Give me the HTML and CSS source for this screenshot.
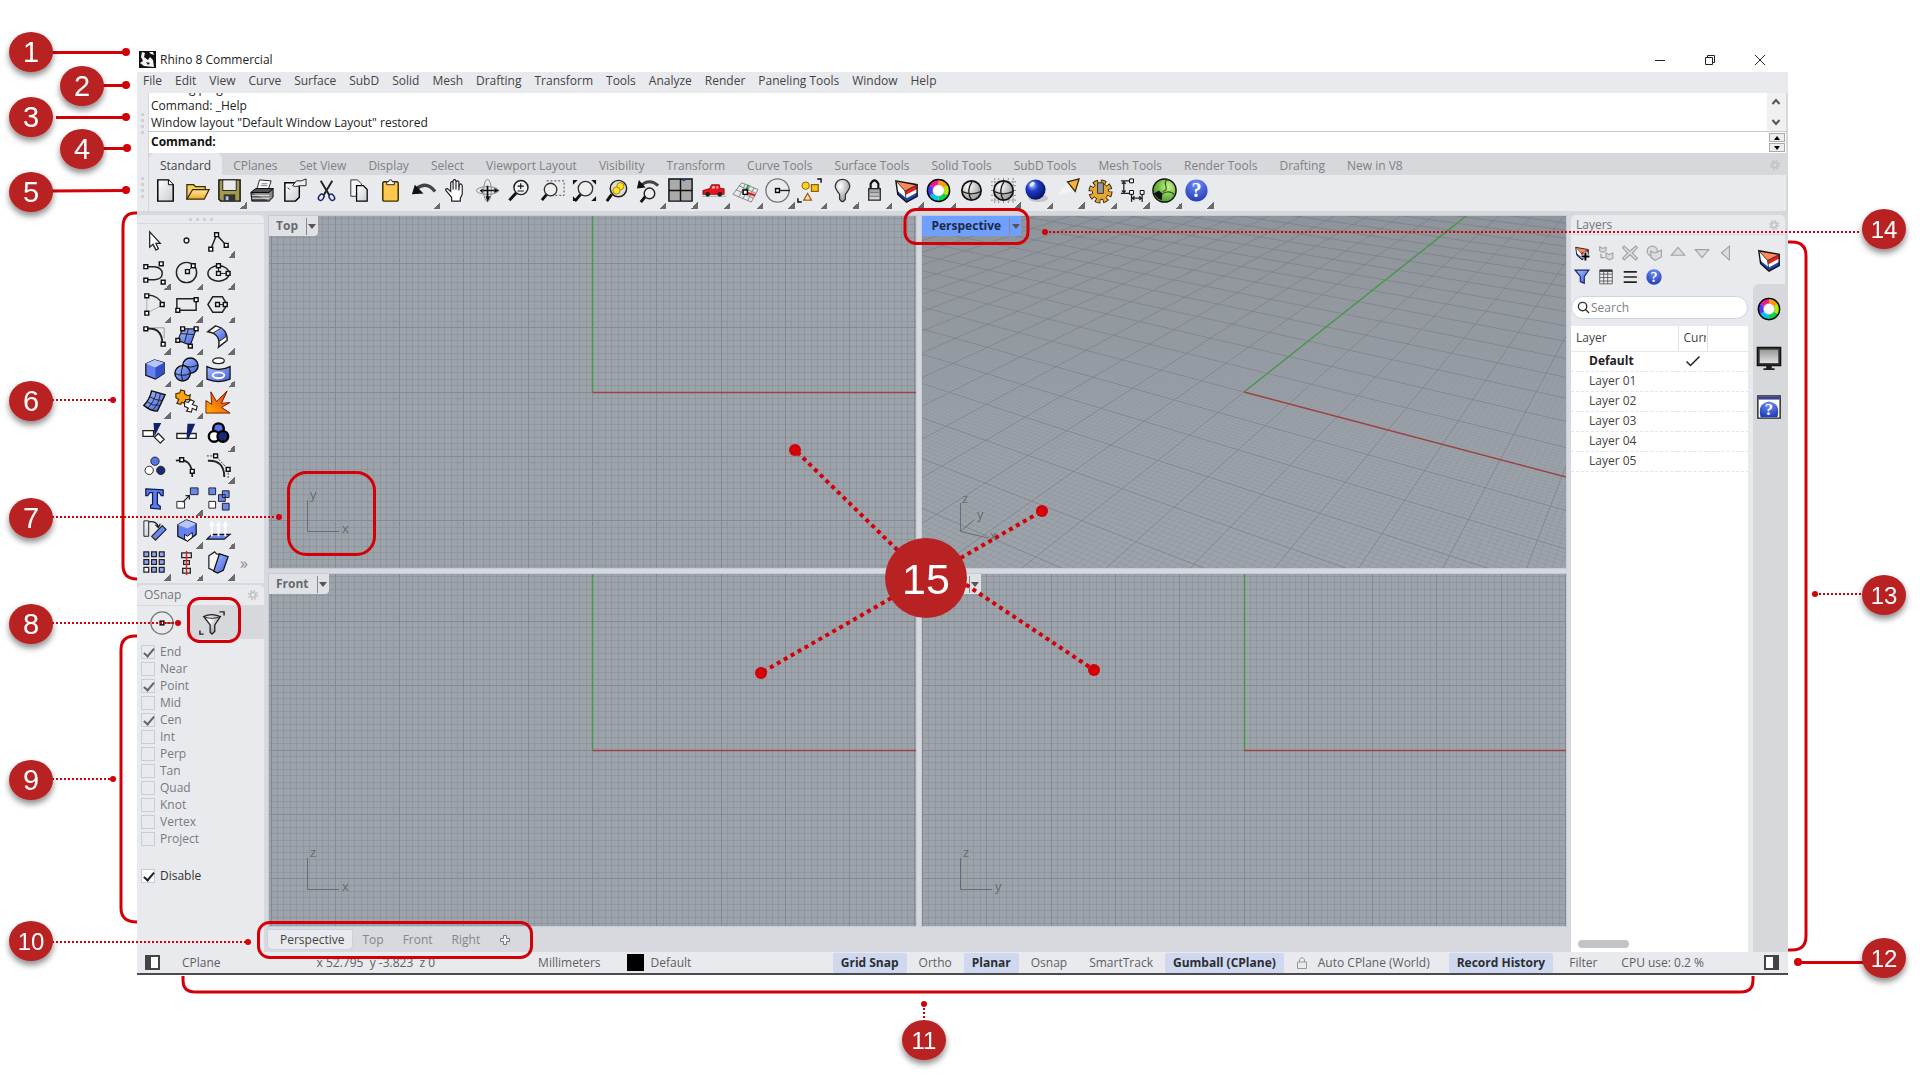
FILE: index.html
```html
<!DOCTYPE html>
<html lang="en">
<head>
<meta charset="utf-8">
<title>Rhino 8 Commercial</title>
<link rel="stylesheet" href="styles.css">
</head>
<body>
<svg class="defs" aria-hidden="true">
  <defs>
    <linearGradient id="gPage" x1="0" y1="0" x2="1" y2="1"><stop offset="0" stop-color="#fff"/><stop offset="1" stop-color="#c9cbce"/></linearGradient>
    <linearGradient id="gGold" x1="0" y1="0" x2="0" y2="1"><stop offset="0" stop-color="#ffe9a0"/><stop offset="1" stop-color="#f0a92a"/></linearGradient>
    <linearGradient id="gBlue" x1="0" y1="0" x2="1" y2="1"><stop offset="0" stop-color="#a9bcff"/><stop offset="1" stop-color="#3f5fe0"/></linearGradient>
    <linearGradient id="gScreen" x1="0" y1="0" x2="0" y2="1"><stop offset="0" stop-color="#999"/><stop offset="1" stop-color="#e0e0e0"/></linearGradient>
    <linearGradient id="gFire" x1="1" y1="0" x2="0" y2="1"><stop offset="0" stop-color="#e03010"/><stop offset="1" stop-color="#ffb400"/></linearGradient>
    <radialGradient id="gBall" cx=".35" cy=".3" r=".8"><stop offset="0" stop-color="#a8c4ff"/><stop offset=".35" stop-color="#1d3cc8"/><stop offset="1" stop-color="#020a55"/></radialGradient>
    <radialGradient id="gHelp" cx=".5" cy=".2" r=".9"><stop offset="0" stop-color="#6f8cf5"/><stop offset="1" stop-color="#1a35b0"/></radialGradient>
    <radialGradient id="gGrey" cx=".35" cy=".3" r=".8"><stop offset="0" stop-color="#fff"/><stop offset="1" stop-color="#8d8d8d"/></radialGradient>
    <radialGradient id="gGreen" cx=".65" cy=".35" r=".8"><stop offset="0" stop-color="#c9f28b"/><stop offset="1" stop-color="#2c8a10"/></radialGradient>
    <symbol id="gear" viewBox="0 0 14 14"><circle cx="7" cy="7" r="3" fill="none" stroke="#c3c4c4" stroke-width="2"/><circle cx="7" cy="7" r="5" fill="none" stroke="#c3c4c4" stroke-width="2" stroke-dasharray="2 1.93"/></symbol>
    <symbol id="layer" viewBox="0 0 28 28"><path d="M3 4 25 8V20L14 26 5 18Z" fill="#fff"/><path d="M4 14 5 18 14 26 25 20V16L14 22Z" fill="#1d43b8"/><path d="M12 14 25 8V12.500L13.500 18.500Z" fill="#e01f1f"/><path d="M3 4 25 8 12.500 14.500Z" fill="#ff8a55"/><path d="M3 4 25 8V20L14 26 5 18Z" fill="none" stroke="#111" stroke-width="1.500"/><path d="M3 4 12.500 14.500 25 8M12.500 14.500 14 26" fill="none" stroke="#333"/></symbol>
    <symbol id="help" viewBox="0 0 28 28"><circle cx="14" cy="14" r="11.500" fill="url(#gHelp)"/><text x="14" y="21" text-anchor="middle" font-family="Liberation Serif" font-weight="bold" font-size="21" fill="#fff">?</text></symbol>
    <symbol id="wheel" viewBox="0 0 28 28"><g fill="none" stroke-width="6"><path d="M14 5.500A8.500 8.500 0 0 1 21.400 9.800" stroke="#ff9a00"/><path d="M21.400 9.800A8.500 8.500 0 0 1 21.400 18.200" stroke="#b8e800"/><path d="M21.400 18.200A8.500 8.500 0 0 1 14 22.500" stroke="#00d84a"/><path d="M14 22.500A8.500 8.500 0 0 1 6.600 18.200" stroke="#00c8e8"/><path d="M6.600 18.200A8.500 8.500 0 0 1 6.600 9.800" stroke="#4a3cf0"/><path d="M6.600 9.800A8.500 8.500 0 0 1 14 5.500" stroke="#f01890"/></g><circle cx="14" cy="14" r="11.500" fill="none" stroke="#000" stroke-width="1.500"/><circle cx="14" cy="14" r="6" fill="#fff" stroke="#999" stroke-width=".6"/></symbol>
    <symbol id="sphere" viewBox="0 0 28 28"><circle cx="14" cy="14" r="10" fill="url(#gGrey)" stroke="#111" stroke-width="1.800"/><path d="M4 15Q14 20 24 15M15 4Q8 14 14 24" fill="none" stroke="#222" stroke-width="1.400"/></symbol>
    <symbol id="lens" viewBox="0 0 28 28"><path d="M10.500 16.500 3.500 24" stroke="#111" stroke-width="3"/><circle cx="15.500" cy="11" r="7.300" fill="#f3f4f6" stroke="#222" stroke-width="1.500"/></symbol>
    <symbol id="snap" viewBox="0 0 28 28"><circle cx="14" cy="14" r="12" fill="none" stroke="#777" stroke-width="1.400"/><path d="M16 14H27" stroke="#222" stroke-width="1.400"/><rect x="12" y="12" width="4" height="4" fill="#fff" stroke="#000" stroke-width="1.500"/></symbol>
  </defs>
</svg>

<main class="window">
  <header class="title-bar">
    <svg class="app-icon" viewBox="0 0 17 17"><path d="M0 0H17V17H0Z" fill="#111"/><path d="M3 1 6 2 5 6 9 9 11 6 14 9 15 16 5 15 1 12 4 10 2 6ZM10 1 14 1 15 4 12 3Z" fill="#f4f4f4"/><path d="M7 11 11 12 9 14Z" fill="#111"/></svg>
    <h1>Rhino 8 Commercial</h1>
    <div class="window-buttons">
      <button aria-label="Minimize"><svg viewBox="0 0 12 12"><path d="M1 6.500H11"/></svg></button>
      <button aria-label="Restore"><svg viewBox="0 0 12 12"><path d="M1.500 3.500H8.500V10.500H1.500ZM3.500 3.500V1.500H10.500V8.500H8.500"/></svg></button>
      <button aria-label="Close"><svg viewBox="0 0 12 12"><path d="M1 1 11 11M11 1 1 11"/></svg></button>
    </div>
  </header>

  <nav class="menu-bar">
    <button>File</button><button>Edit</button><button>View</button><button>Curve</button><button>Surface</button><button>SubD</button><button>Solid</button><button>Mesh</button><button>Drafting</button><button>Transform</button><button>Tools</button><button>Analyze</button><button>Render</button><button>Paneling Tools</button><button>Window</button><button>Help</button>
  </nav>

  <section class="command-area">
    <div class="grip"><i></i><i></i><i></i><i></i></div>
    <div class="command-main">
      <div class="history">
        <div class="history-text"><p>Loading plug-ins</p><p>Command: _Help</p><p>Window layout "Default Window Layout" restored</p></div>
        <div class="scroller">
          <button aria-label="Scroll up"><svg viewBox="0 0 10 10"><path d="M1.500 7 5 3 8.500 7"/></svg></button>
          <button aria-label="Scroll down"><svg viewBox="0 0 10 10"><path d="M1.500 3 5 7 8.500 3"/></svg></button>
        </div>
      </div>
      <div class="prompt">
        <label for="command">Command:</label><input id="command" type="text">
        <div class="spinner">
          <button aria-label="Previous"><svg viewBox="0 0 8 6"><path d="M1 5 4 1 7 5Z"/></svg></button>
          <button aria-label="Next"><svg viewBox="0 0 8 6"><path d="M1 1 4 5 7 1Z"/></svg></button>
        </div>
      </div>
    </div>
  </section>

  <section class="toolbar-area">
    <div class="grip low"><i></i><i></i><i></i><i></i></div>
    <div class="toolbar-main">
      <div class="tabs">
        <button class="active">Standard</button><button>CPlanes</button><button>Set View</button><button>Display</button><button>Select</button><button>Viewport Layout</button><button>Visibility</button><button>Transform</button><button>Curve Tools</button><button>Surface Tools</button><button>Solid Tools</button><button>SubD Tools</button><button>Mesh Tools</button><button>Render Tools</button><button>Drafting</button><button>New in V8</button>
        <svg class="gear"><use href="#gear"/></svg>
      </div>
      <div class="toolbar">
        <button aria-label="New"><svg viewBox="0 0 28 28"><path d="M6 3H17L22 8V25H6Z" fill="url(#gPage)" stroke="#000" stroke-width="1.500"/><path d="M17 3V8H22" fill="#fff" stroke="#000"/></svg></button>
        <button aria-label="Open"><svg viewBox="0 0 28 28"><path d="M3 23V8H10L12 10H22V13" fill="#f5cf62" stroke="#3a2c00" stroke-width="1.300"/><path d="M3 23 9 13H26L21 23Z" fill="url(#gGold)" stroke="#3a2c00" stroke-width="1.300"/></svg></button>
        <button class="more" aria-label="Save"><svg viewBox="0 0 28 28"><path d="M3 3H25V25H5L3 23Z" fill="#a39a4f" stroke="#111" stroke-width="1.500"/><path d="M7 3H21V14H7Z" fill="#e9eaec" stroke="#222"/><path d="M8 18H20V25H8Z" fill="#333"/><path d="M10 20H13V24H10Z" fill="#aac4e8"/></svg></button>
        <button aria-label="Print"><svg viewBox="0 0 28 28"><path d="M9 13 12 3 24 4 21 13Z" fill="#fff" stroke="#222"/><path d="M14 7H20M13 9H20" stroke="#777"/><path d="M3 16 8 12H26L22 16V25H4Z" fill="#555" stroke="#000"/><path d="M3 16H22L26 12V21L22 25" fill="#888" stroke="#000"/><path d="M4 19H22M4 22H22" stroke="#eee"/></svg></button>
        <button aria-label="Properties"><svg viewBox="0 0 28 28"><path d="M4 6H19V21L15 25H4Z" fill="url(#gPage)" stroke="#000" stroke-width="1.500"/><path d="M12 9 16 4H21L26 2V9H20L15 10Z" fill="#eee" stroke="#222"/><path d="M7 11 9 13" stroke="#222"/></svg></button>
        <button aria-label="Cut"><svg viewBox="0 0 28 28"><path d="M8 4 17 19M20 4 11 19" stroke="#222" stroke-width="2"/><ellipse cx="8.500" cy="21" rx="2.500" ry="3.500" fill="none" stroke="#16266e" stroke-width="1.500" transform="rotate(35 8.500 21)"/><ellipse cx="19.500" cy="21" rx="2.500" ry="3.500" fill="none" stroke="#16266e" stroke-width="1.500" transform="rotate(-35 19.500 21)"/></svg></button>
        <button aria-label="Copy"><svg viewBox="0 0 28 28"><path d="M6 3H13L17 7V20H6Z" fill="#f5f5f6" stroke="#333"/><path d="M12 9H19L23 13V25H12Z" fill="url(#gPage)" stroke="#000" stroke-width="1.300"/></svg></button>
        <button aria-label="Paste"><svg viewBox="0 0 28 28"><rect x="6" y="5" width="16" height="20" rx="1.500" fill="#ffc94d" stroke="#3a2c00" stroke-width="1.500"/><path d="M10 8V5H12L13 3H15L16 5H18V8Z" fill="#fff" stroke="#222"/></svg></button>
        <button class="more" aria-label="Undo"><svg viewBox="0 0 28 28"><path d="M7 12Q17 4 26 15" fill="none" stroke="#444" stroke-width="3.500"/><path d="M2 18 5 8 14 17Z" fill="#111"/></svg></button>
        <button aria-label="Pan"><svg viewBox="0 0 28 28"><path d="M10 25V21L4 14Q3 12 5.500 12L9 15V6Q10 3.500 11.500 6V13V4Q13 1.500 14.500 4V13V5Q16 3 17.500 5V14L18 8Q20 6 21 9V18L19 22V25Z" fill="#fff" stroke="#222" stroke-width="1.200"/></svg></button>
        <button aria-label="Rotate view"><svg viewBox="0 0 28 28"><g fill="none" stroke="#888"><ellipse cx="14" cy="14" rx="11.500" ry="4"/><ellipse cx="14" cy="14" rx="4" ry="11.500"/></g><path d="M9 14H21M14 9V21" stroke="#111" stroke-width="1.800"/><path d="M12 20H17L14 26ZM21 11.500V16.500L26 14ZM9 12 6 14 9 17Z" fill="#111"/></svg></button>
        <button aria-label="Zoom dynamic"><svg viewBox="0 0 28 28"><use href="#lens"/><path d="M12 9.500H18.500M15.300 6.500V12.500M12 14.500H18.500" stroke="#111" stroke-width="1.200"/></svg></button>
        <button aria-label="Zoom window"><svg viewBox="0 0 28 28"><path d="M8 4H26V19H9" fill="none" stroke="#444" stroke-dasharray="2 2"/><path d="M8 18 3 24" stroke="#111" stroke-width="3"/><circle cx="12" cy="13" r="6.500" fill="#eee" stroke="#333" stroke-width="1.400"/></svg></button>
        <button aria-label="Zoom extents"><svg viewBox="0 0 28 28"><path d="M10 18 4 25" stroke="#111" stroke-width="3"/><circle cx="15" cy="12" r="7.500" fill="#eee" stroke="#333" stroke-width="1.400"/><path d="M2 3H7L2 8ZM26 3H21L26 8ZM26 25H21L26 20ZM2 25V20L7 25Z" fill="#111"/></svg></button>
        <button aria-label="Zoom selected"><svg viewBox="0 0 28 28"><path d="M9 18 4 25" stroke="#111" stroke-width="3"/><circle cx="16" cy="12" r="8.500" fill="#ddd" stroke="#222" stroke-width="1.500"/><circle cx="18" cy="9.500" r="3.700" fill="#ffe22e" stroke="#a58a00"/><circle cx="14" cy="14" r="3.700" fill="#ffe22e" stroke="#a58a00"/></svg></button>
        <button class="more" aria-label="Undo view"><svg viewBox="0 0 28 28"><path d="M6 9Q15 1 24 9" fill="none" stroke="#444" stroke-width="3"/><path d="M2 12 4 3 11 11Z" fill="#111"/><path d="M11 20 6 26" stroke="#111" stroke-width="3"/><circle cx="15" cy="17" r="5.500" fill="#eee" stroke="#222" stroke-width="1.500"/></svg></button>
        <button class="more" aria-label="Four views"><svg viewBox="0 0 28 28"><path d="M2 2H26V25H2Z" fill="#aaa" stroke="#111" stroke-width="1.500"/><path d="M14 2V25M2 14H26" stroke="#111" stroke-width="1.500"/><path d="M16 3.500H19" stroke="#1d43d8" stroke-width="1.500"/></svg></button>
        <button class="more" aria-label="Car"><svg viewBox="0 0 28 28"><path d="M2 20H27" stroke="#aaa"/><path d="M3 18V14L10 12 12 8H20L21 12H25V18Z" fill="#e5151c" stroke="#8a0000" stroke-width=".8"/><path d="M13 9.500H15.500V12H12ZM17 9.500H19V12H17Z" fill="#f5c8c8"/><circle cx="8" cy="18" r="2.400" fill="#222"/><circle cx="20.500" cy="18" r="2.400" fill="#222"/></svg></button>
        <button class="more" aria-label="Set CPlane"><svg viewBox="0 0 28 28"><path d="M10 6 27 13 20 26 1 18ZM7 9 25 17M4 13 22 22M14 7 7 21M19 9 11 23M23 11 16 25" fill="none" stroke="#888"/><path d="M14 16 17 8" stroke="#18a030" stroke-width="2"/><path d="M14 16 24 19" stroke="#e02020" stroke-width="2.500"/><path d="M11.500 13.500H16V18H11.500Z" fill="#fff" stroke="#000" stroke-width="1.500"/></svg></button>
        <button class="more" aria-label="Object snap"><svg viewBox="0 0 28 28"><use href="#snap"/></svg></button>
        <button class="more" aria-label="Select"><svg viewBox="0 0 28 28"><circle cx="10" cy="9" r="3.800" fill="#ffd21c" stroke="#8a6200"/><path d="M16 8H23V15H16Z" fill="#ffc21c" stroke="#8a6200" stroke-width="1.300"/><path d="M12 17 16 24H8Z" fill="#ffe7c0" stroke="#a45a10" stroke-width="1.300"/><path d="M22 2H26V6M2 22V26H6" fill="none" stroke="#111" stroke-width="1.500"/></svg></button>
        <button class="more" aria-label="Hide"><svg viewBox="0 0 28 28"><path d="M11 18Q6 12 6.500 9Q8 2.500 14 2.500Q20 2.500 21.500 9Q22 12 17 18V23Q14 28 11 23Z" fill="url(#gGrey)" stroke="#333" stroke-width="1.300"/></svg></button>
        <button class="more" aria-label="Lock"><svg viewBox="0 0 28 28"><path d="M10 13V7Q14 0 18 7V13" fill="none" stroke="#111" stroke-width="2.200"/><path d="M8 12H20V24H8Z" fill="url(#gScreen)" stroke="#222" stroke-width="1.300"/><path d="M8 16H20M8 20H20" stroke="#777"/></svg></button>
        <button class="more" aria-label="Layers"><svg><use href="#layer"/></svg></button>
        <button class="more" aria-label="Color"><svg><use href="#wheel"/></svg></button>
        <button aria-label="Shade"><svg><use href="#sphere"/></svg></button>
        <button class="more" aria-label="Shaded view"><svg viewBox="0 0 28 28"><path d="M5 1V27M9 1V27M14 1V27M19 1V27M24 1V27M1 5H27M1 9H27M1 14H27M1 19H27M1 24H27" stroke="#888" stroke-dasharray="2 1"/><use href="#sphere"/></svg></button>
        <button class="more" aria-label="Render"><svg viewBox="0 0 28 28"><ellipse cx="17" cy="22" rx="10" ry="4" fill="#c5c5c8"/><circle cx="14" cy="13" r="10.500" fill="url(#gBall)"/><ellipse cx="10.500" cy="7.500" rx="3" ry="2" fill="#e8f0ff" transform="rotate(-35 10.500 7.500)"/></svg></button>
        <button class="more" aria-label="Spotlight"><svg viewBox="0 0 28 28"><path d="M3 20 14 6 20 14Z" fill="#f3f3f1"/><path d="M14 5 26 2 22 15Z" fill="#f8b43a" stroke="#3a2200" stroke-width="1.300"/></svg></button>
        <button class="more" aria-label="Options"><svg viewBox="0 0 28 28"><circle cx="14" cy="15" r="9.500" fill="none" stroke="#3a2500" stroke-width="6" stroke-dasharray="5 2.460"/><circle cx="14" cy="15" r="8.500" fill="#e5a834" stroke="#3a2500"/><circle cx="14" cy="15" r="9.500" fill="none" stroke="#e5a834" stroke-width="4" stroke-dasharray="3.400 4.060" stroke-dashoffset="-.8"/><path d="M11 6H17V17H11Z" fill="#999" stroke="#333"/></svg></button>
        <button class="more" aria-label="Dimension"><svg viewBox="0 0 28 28"><g fill="none" stroke="#222" stroke-width="1.300"><path d="M2 4H12M5 5V16M2 17H13V26M14 22H23M24 18V26M3 7 5 5 7 7M3 14 5 16 7 14M16 20 14 22 16 24M21 20 23 22 21 24"/></g><g fill="#fff" stroke="#000"><path d="M11 2H15V6H11ZM11 14H15V18H11ZM22 14H26V18H22Z"/></g></svg></button>
        <button class="more" aria-label="Grasshopper"><svg viewBox="0 0 28 28"><circle cx="14" cy="14" r="12" fill="url(#gGreen)" stroke="#111" stroke-width="1.500"/><path d="M12 15Q18 14 15 8Q14 5 17 2.500M12 17Q20 13 25 19" fill="none" stroke="#2a5c10" stroke-width="1.200"/><path d="M3 17 8 14 12 17 11 24 7 22Z" fill="#111"/></svg></button>
        <button class="more" aria-label="Help"><svg><use href="#help"/></svg></button>
      </div>
    </div>
  </section>

  <section class="workspace">
    <aside class="left-dock">
      <div class="toolbox">
        <div class="top-grip"><i></i><i></i><i></i><i></i></div>
        <div class="tools">
          <button aria-label="Pointer"><svg viewBox="0 0 28 28"><path d="M9 5V21L12.500 18 15.500 24 18 22.500 15.500 17H20Z" fill="#fff" stroke="#222" stroke-width="1.300"/></svg></button>
          <button aria-label="Point"><svg viewBox="0 0 28 28"><circle cx="14" cy="14" r="2.500" fill="#fff" stroke="#222" stroke-width="1.500"/></svg></button>
          <button class="more" aria-label="Polyline"><svg viewBox="0 0 28 28"><path d="M6 23 12 8 22 19" fill="none" stroke="#222" stroke-width="1.500"/><path d="M4 21H8V25H4ZM10 6H14V10H10ZM20 17H24V21H20Z" class="node"/></svg></button>
          <button class="more" aria-label="Curve"><svg viewBox="0 0 28 28"><path d="M6 8H14Q22 9 22 15Q22 21 14 21.500H6" fill="none" stroke="#222" stroke-width="1.500"/><path d="M3 6H7V10H3ZM3 20H7V24H3ZM19 3H23V7H19ZM21 22H25V26H21Z" class="node"/></svg></button>
          <button class="more" aria-label="Circle"><svg viewBox="0 0 28 28"><circle cx="14" cy="14" r="10.500" fill="none" stroke="#222" stroke-width="1.500"/><path d="M15 13 21 7" stroke="#222"/><path d="M13 11H17V15H13ZM19 5H23V9H19Z" class="node"/></svg></button>
          <button class="more" aria-label="Ellipse"><svg viewBox="0 0 28 28"><ellipse cx="14" cy="15" rx="11" ry="8" fill="none" stroke="#222" stroke-width="1.500"/><path d="M14 7V15H25" fill="none" stroke="#222"/><path d="M12 5H16V9H12ZM12 13H16V17H12ZM22 13H26V17H22Z" class="node"/></svg></button>
          <button class="more" aria-label="Arc"><svg viewBox="0 0 28 28"><path d="M6 23V5M23 14 6 23" fill="none" stroke="#aaa"/><path d="M7 4Q19 5 22 14" fill="none" stroke="#222" stroke-width="1.500"/><path d="M4 3H8V7H4ZM20 12H24V16H20ZM4 21H8V25H4Z" class="node"/></svg></button>
          <button class="more" aria-label="Rectangle"><svg viewBox="0 0 28 28"><path d="M4 8H24V20H4Z" fill="none" stroke="#222" stroke-width="1.500"/><path d="M3 18H7V22H3ZM22 7H26V11H22Z" class="node"/></svg></button>
          <button class="more" aria-label="Polygon"><svg viewBox="0 0 28 28"><path d="M8 6H18L23 14 18 22H8L3 14Z" fill="none" stroke="#222" stroke-width="1.500"/><path d="M14 14H22" stroke="#222"/><path d="M11 12H15V16H11ZM19 12H23V16H19Z" class="node"/></svg></button>
          <button class="more" aria-label="Fillet"><svg viewBox="0 0 28 28"><path d="M12 5H24V16" fill="none" stroke="#999"/><path d="M5 6Q22 4 22 21" fill="none" stroke="#222" stroke-width="2"/><path d="M3 4H7V8H3ZM21 20H25V24H21Z" class="node"/></svg></button>
          <button class="more" aria-label="Surface"><svg viewBox="0 0 28 28"><path d="M10 6H24L18 23 5 18Z" fill="url(#gBlue)" stroke="#222" stroke-width="1.300"/><path d="M8 11 22 12M16 6 12 20" stroke="#222"/><path d="M8 4H12V8H8ZM22 4H26V8H22ZM3 16H7V20H3ZM16 22H20V26H16Z" class="node"/></svg></button>
          <button class="more" aria-label="Sweep"><svg viewBox="0 0 28 28"><path d="M3 9 11 3Q23 6 23 17V18L14 25Q17 11 3 9Z" fill="#fff" stroke="#222" stroke-width="1.500"/><path d="M9 10 17 5Q22 9 22 14L15 19Q14 13 9 10Z" fill="url(#gBlue)" stroke="#222"/></svg></button>
          <button class="more" aria-label="Box"><svg viewBox="0 0 28 28"><path d="M5 8 14 4 24 7V18L15 24 5 20Z" fill="#6582ee" stroke="#111" stroke-width="1.300"/><path d="M5 8 14 4 24 7 15 12Z" fill="#b5c5ff"/><path d="M15 12 24 7V18L15 24Z" fill="#3450c8"/></svg></button>
          <button class="more" aria-label="Boolean"><svg viewBox="0 0 28 28"><circle cx="18" cy="10" r="8" fill="url(#gBlue)" stroke="#111" stroke-width="1.500"/><circle cx="10" cy="18" r="8" fill="url(#gBlue)" stroke="#111" stroke-width="1.500"/><path d="M2 18Q10 22 18 18M10 10Q7 18 10 26M10 9Q18 14 26 9" fill="none" stroke="#111"/></svg></button>
          <button class="more" aria-label="Project curve"><svg viewBox="0 0 28 28"><ellipse cx="14" cy="5" rx="6" ry="3" fill="#fff" stroke="#222" stroke-width="1.300"/><path d="M2 11Q14 17 26 11V24Q14 29 2 24Z" fill="url(#gBlue)" stroke="#111" stroke-width="1.300"/><ellipse cx="14" cy="20" rx="6" ry="3" fill="none" stroke="#fff" stroke-width="2"/></svg></button>
          <button class="more" aria-label="Mesh"><svg viewBox="0 0 28 28"><path d="M11 3 25 7 17 24Q10 24 3 18Q9 12 11 3Z" fill="url(#gBlue)" stroke="#111" stroke-width="1.500"/><path d="M9 9Q15 13 22 13M6 14Q12 19 19 18M16 4Q14 14 7 21M20 6Q19 16 12 23" fill="none" stroke="#222"/></svg></button>
          <button class="more" aria-label="Plug-ins"><svg viewBox="0 0 28 28"><path d="M3 6 7 5 8 2 12 3 12 6 15 8 18 7 17 12 13 12 13 16 9 15 8 17 4 16 6 12 3 10Z" fill="#f8a314" stroke="#4a2a00" stroke-width="1.200"/><path d="M12 14 16 15 18 12 22 14 20 17 25 19 24 23 20 21 19 25 14 24 16 21 12 19Z" fill="#fff" stroke="#222" stroke-width="1.200"/></svg></button>
          <button aria-label="Explode"><svg viewBox="0 0 28 28"><path d="M1 26V13L7 17 6 4 12 14 23 3 17 16 26 15 17 20 26 26Z" fill="url(#gFire)" stroke="#7a1800"/></svg></button>
          <button aria-label="Trim"><svg viewBox="0 0 28 28"><path d="M13 11H2V17H13ZM14 18 20 24 24 20 18 14Z" fill="#fff" stroke="#222" stroke-width="1.300"/><path d="M13 3H21L14 17Z" fill="#10216e"/></svg></button>
          <button aria-label="Split"><svg viewBox="0 0 28 28"><path d="M4 14H24V19H4Z" fill="#fff" stroke="#222" stroke-width="1.400"/><path d="M15 4H23L16 20H14Z" fill="#10216e"/></svg></button>
          <button class="more" aria-label="Group"><svg viewBox="0 0 28 28"><g stroke="#000" stroke-width="2.500"><circle cx="14" cy="9" r="5.500" fill="#5775e8"/><circle cx="9.500" cy="17" r="5.500" fill="#fff"/><circle cx="18.500" cy="17" r="5.500" fill="#182b78"/></g></svg></button>
          <button aria-label="Ungroup"><svg viewBox="0 0 28 28"><g stroke="#222"><circle cx="14.500" cy="8.500" r="4.300" fill="#5775e8"/><circle cx="8.500" cy="18" r="4.300" fill="#fff"/><circle cx="20.500" cy="18" r="4.300" fill="#182b78"/></g></svg></button>
          <button aria-label="Edit points"><svg viewBox="0 0 28 28"><path d="M3 8Q20 4 20 25" fill="none" stroke="#222" stroke-width="1.800"/><path d="M7 5H11V9H7ZM18 17H22V21H18Z" class="node"/></svg></button>
          <button class="more" aria-label="Control points"><svg viewBox="0 0 28 28"><path d="M2 3H11L24 17V26" fill="none" stroke="#333" stroke-dasharray="2 1.500"/><path d="M3 8Q20 7 20 25" fill="none" stroke="#222" stroke-width="2"/><path d="M9 1H13V5H9ZM22 15H26V19H22Z" class="node"/></svg></button>
          <button aria-label="Text tool"><svg viewBox="0 0 28 28"><path d="M5 4 23 5V11H21L19 8H17V20L20 22V25L10 24V21L12 20V8H9L7 11H5Z" fill="#5d7ce8" stroke="#0c1a60" stroke-width="1.300"/></svg></button>
          <button class="more" aria-label="Move"><svg viewBox="0 0 28 28"><path d="M4 17H12V24H4Z" fill="#fff" stroke="#222"/><path d="M18 3H26V10H18Z" fill="#6a86f0" stroke="#222"/><path d="M10 18 17 11M13 11H17V15" fill="none" stroke="#222" stroke-width="1.300"/></svg></button>
          <button aria-label="Copy objects"><svg viewBox="0 0 28 28"><g stroke="#222" fill="#6a86f0"><path d="M4 3H11V10H4ZM18 6H25V13H18ZM14 10H21V17H14ZM18 19H25V26H18Z"/><path d="M4 17H11V24H4Z" fill="#fff"/></g></svg></button>
          <button aria-label="Rotate"><svg viewBox="0 0 28 28"><path d="M3 4H8V20H3Z" fill="url(#gPage)" stroke="#222"/><path d="M8 5Q16 4 18 10M15 8 18 11 20 7" fill="none" stroke="#222" stroke-width="1.300"/><path d="M11 20 22 9 26 13 15 24Z" fill="#6a86f0" stroke="#222" stroke-width="1.200"/></svg></button>
          <button class="more" aria-label="Solid edit"><svg viewBox="0 0 28 28"><path d="M5 8 14 3 24 7V18L15 25 5 20Z" fill="#6582ee" stroke="#111" stroke-width="1.300"/><path d="M5 8 14 3 24 7 15 12Z" fill="#b5c5ff"/><path d="M12 18 15 20 20 16V21L15 25 12 23Z" fill="#fff" stroke="#111"/></svg></button>
          <button class="more" aria-label="Extrude"><svg viewBox="0 0 28 28"><path d="M7 18H26L20 23H2Z" fill="#6a86f0" stroke="#111" stroke-width="1.200"/><path d="M7 20V8M14 20V8M21 20V8" stroke="#fff" stroke-width="2"/><path d="M4 9 7 4 10 9ZM11 9 14 4 17 9ZM18 9 21 4 24 9Z" fill="#fff"/></svg></button>
          <button class="more" aria-label="Array"><svg viewBox="0 0 28 28"><g fill="#8fa6f8" stroke="#222" stroke-width="1.300"><path d="M3 3H8V8H3ZM11 3H16V8H11ZM19 3H24V8H19ZM3 11H8V16H3ZM11 11H16V16H11ZM19 11H24V16H19ZM11 19H16V24H11ZM19 19H24V24H19Z"/><path d="M3 19H8V24H3Z" fill="#fff"/></g></svg></button>
          <button class="more" aria-label="Align"><svg viewBox="0 0 28 28"><g fill="#e4e4e4" stroke="#222" stroke-width="1.300"><path d="M9 4H19V9H9ZM11 12H17V16H11ZM10 20H18V25H10Z"/></g><path d="M14 2V27" stroke="#e02020" stroke-width="1.500"/></svg></button>
          <button class="more" aria-label="Flow"><svg viewBox="0 0 28 28"><path d="M4 7 10 3 12 5 18 6 12 24 4 20Z" fill="#f5f5f5" stroke="#222" stroke-width="1.300"/><path d="M15 5 24 8 19 22 13 25 9 23Z" fill="url(#gBlue)" stroke="#111" stroke-width="1.300"/></svg></button>
        </div>
        <button class="expand" aria-label="More tools">»</button>
      </div>
      <div class="osnap">
        <h2 class="panel-title">OSnap <svg class="gear"><use href="#gear"/></svg></h2>
        <div class="osnap-tabs">
          <button aria-label="Object snaps"><svg><use href="#snap"/></svg></button>
          <button class="filter" aria-label="Selection filter"><svg viewBox="0 0 28 28"><path d="M5 7Q13 3 23 7L17 16V23L14 26 12 24V16Z" fill="url(#gGrey)" stroke="#222" stroke-width="1.400"/><path d="M5 7Q14 11 23 7" fill="none" stroke="#222"/><path d="M22 2H27V6M1 22V26H5" fill="none" stroke="#222" stroke-width="1.500"/></svg></button>
        </div>
        <div class="checks">
          <label><input type="checkbox" checked>End</label>
          <label><input type="checkbox">Near</label>
          <label><input type="checkbox" checked>Point</label>
          <label><input type="checkbox">Mid</label>
          <label><input type="checkbox" checked>Cen</label>
          <label><input type="checkbox">Int</label>
          <label><input type="checkbox">Perp</label>
          <label><input type="checkbox">Tan</label>
          <label><input type="checkbox">Quad</label>
          <label><input type="checkbox">Knot</label>
          <label><input type="checkbox">Vertex</label>
          <label><input type="checkbox">Project</label>
          <label class="disable"><input type="checkbox" checked>Disable</label>
        </div>
      </div>
    </aside>

    <div class="center">
      <div class="viewports">
        <section class="viewport"><canvas data-kind="plan"></canvas>
          <button class="view-label">Top<b></b></button>
          <svg class="axes" viewBox="0 0 60 60"><path d="M1.500 17V48.500H33"/><text x="4" y="16">y</text><text x="36" y="50">x</text></svg></section>
        <section class="viewport"><canvas data-kind="perspective"></canvas>
          <button class="view-label current">Perspective<b></b></button>
          <svg class="axes" viewBox="0 0 60 60"><path d="M1.500 20V48.500L15 37M1.500 48.500 29 55"/><text x="3" y="20">z</text><text x="18" y="36">y</text><text x="31" y="57">x</text></svg></section>
        <section class="viewport"><canvas data-kind="plan"></canvas>
          <button class="view-label">Front<b></b></button>
          <svg class="axes" viewBox="0 0 60 60"><path d="M1.500 17V48.500H33"/><text x="4" y="16">z</text><text x="36" y="50">x</text></svg></section>
        <section class="viewport"><canvas data-kind="plan"></canvas>
          <button class="view-label">Right<b></b></button>
          <svg class="axes" viewBox="0 0 60 60"><path d="M1.500 17V48.500H33"/><text x="4" y="16">z</text><text x="36" y="50">y</text></svg></section>
      </div>
      <div class="view-tabs">
        <button class="active">Perspective</button><button>Top</button><button>Front</button><button>Right</button>
        <button aria-label="New viewport"><svg viewBox="0 0 12 12"><path d="M4.500 1.500H7.500V4.500H10.500V7.500H7.500V10.500H4.500V7.500H1.500V4.500H4.500Z"/></svg></button>
      </div>
    </div>

    <aside class="right-dock">
      <h2 class="panel-title">Layers <svg class="gear"><use href="#gear"/></svg></h2>
      <div class="dock-body">
        <div class="layers">
          <div class="layer-tools">
            <button aria-label="New layer"><svg viewBox="0 0 28 28"><use href="#layer"/><path d="M20 12V27M12 20H27" stroke="#fff" stroke-width="6"/><path d="M20 13V27M13 20H27" stroke="#000" stroke-width="3.500"/></svg></button>
            <button aria-label="New sublayer"><svg viewBox="0 0 28 28"><path d="M3 3 8 6 14 4V10L8 13 3 10ZM14 14 20 17 26 14V23L20 26 14 22ZM5 15V22H12" class="off"/></svg></button>
            <button aria-label="Delete"><svg viewBox="0 0 28 28"><path d="M4 2 14 11 24 2 27 5 18 14 27 23 24 26 14 17 4 26 1 23 10 14 1 5Z" class="off"/></svg></button>
            <button aria-label="Duplicate"><svg viewBox="0 0 28 28"><circle cx="11" cy="11" r="9" class="off"/><path d="M8 11 16 14 27 9V21L16 27 9 22Z" class="off"/></svg></button>
            <button aria-label="Move up"><svg viewBox="0 0 28 28"><path d="M14 4 26 18H2Z" class="off"/></svg></button>
            <button aria-label="Move down"><svg viewBox="0 0 28 28"><path d="M14 22 2 8H26Z" class="off"/></svg></button>
            <button aria-label="Move out"><svg viewBox="0 0 28 28"><path d="M6 14 20 2V26Z" class="off"/></svg></button>
            <button aria-label="Filter"><svg viewBox="0 0 28 28"><path d="M2 2H26L18 13V25L11 22V13Z" fill="url(#gBlue)" stroke="#16256a" stroke-width="2"/></svg></button>
            <button aria-label="Columns"><svg viewBox="0 0 28 28"><path d="M3 2H25V26H3ZM10 2V26M17 2V26M3 9H25M3 15H25M3 21H25" fill="#eee" stroke="#555" stroke-width="1.500"/><path d="M3 3H25" stroke="#333" stroke-width="4"/></svg></button>
            <button aria-label="Menu"><svg viewBox="0 0 28 28"><path d="M3 5H26M3 14H26M3 23H26" stroke="#222" stroke-width="3"/></svg></button>
            <button aria-label="Help"><svg viewBox="2 2 24 24"><use href="#help" width="28" height="28"/></svg></button>
          </div>
          <label class="search"><svg viewBox="0 0 14 14"><circle cx="6" cy="6" r="4.500"/><path d="M9 9 13 13"/></svg><input type="search" placeholder="Search" aria-label="Search layers"></label>
          <div class="layer-list">
            <table>
              <thead><tr><th>Layer</th><th><span>Current</span></th><th></th></tr></thead>
              <tbody>
                <tr class="current-layer"><td>Default</td><td><svg viewBox="0 0 16 12"><path d="M1.500 6.500 5.500 10.500 14.500 1.500"/></svg></td><td></td></tr>
                <tr><td>Layer 01</td><td></td><td></td></tr>
                <tr><td>Layer 02</td><td></td><td></td></tr>
                <tr><td>Layer 03</td><td></td><td></td></tr>
                <tr><td>Layer 04</td><td></td><td></td></tr>
                <tr><td>Layer 05</td><td></td><td></td></tr>
              </tbody>
            </table>
            <div class="scroll-thumb"></div>
          </div>
        </div>
        <nav class="dock-tabs">
          <button class="active" aria-label="Layers"><svg><use href="#layer"/></svg></button>
          <button aria-label="Materials"><svg><use href="#wheel"/></svg></button>
          <button aria-label="Display"><svg viewBox="0 0 28 28"><path d="M1.500 2.500H26.500V22H1.500Z" fill="#333" stroke="#111" stroke-width="1.500"/><path d="M4 5H24V19.500H4Z" fill="url(#gScreen)"/><path d="M11 22H17V25H20V27H8V25H11Z" fill="#222"/></svg></button>
          <button aria-label="Help"><svg viewBox="0 0 28 28"><path d="M2 2H26V26H2Z" fill="#fff" stroke="#222" stroke-width="1.500"/><path d="M2.500 2.500H25.500V6H2.500Z" fill="#3a3f90"/><path d="M5 25Q1 10 14 8Q27 10 23 25Z" fill="url(#gHelp)"/><text x="14" y="23" text-anchor="middle" font-family="Liberation Serif" font-weight="bold" font-size="18" fill="#fff">?</text></svg></button>
        </nav>
      </div>
    </aside>
  </section>

  <footer class="status-bar">
    <button class="side-toggle" aria-label="Toggle left sidebar"></button>
    <button class="s-cplane">CPlane</button>
    <output class="s-coords">x 52.795&nbsp; y -3.823&nbsp; z 0</output>
    <button class="s-units">Millimeters</button>
    <button class="s-layer"><i class="swatch"></i>Default</button>
    <div class="modes">
      <button class="on">Grid Snap</button><button>Ortho</button><button class="on">Planar</button><button>Osnap</button><button>SmartTrack</button><button class="on">Gumball (CPlane)</button>
      <button class="auto"><svg viewBox="0 0 12 14"><path d="M1.500 6H10.500V12.500H1.500ZM3.500 6V3.500Q6 0 8.500 3.500V6"/></svg>Auto CPlane (World)</button>
      <button class="on">Record History</button><button class="filter-mode">Filter</button><output>CPU use: 0.2 %</output>
    </div>
    <button class="side-toggle right" aria-label="Toggle right sidebar"></button>
  </footer>
</main>

<svg class="callouts">
  <defs><filter id="shadow" x="-30%" y="-30%" width="160%" height="180%"><feDropShadow dx="0" dy="4" stdDeviation="3" flood-color="#000" flood-opacity=".45"/></filter></defs>
  <g class="outline">
    <path d="M137 213H135Q123 213 123 227V565Q123 579 137 579"/>
    <path d="M137 636H135Q121 636 121 650V908Q121 922 137 922"/>
    <rect x="288.500" y="472.500" width="86" height="82" rx="18"/>
    <rect x="188.500" y="598.500" width="51" height="43" rx="11"/>
    <rect x="258.500" y="922.500" width="273" height="35" rx="11"/>
    <rect x="905" y="209.500" width="123" height="34" rx="11"/>
    <path d="M183 976V980Q183 992 195 992H1741Q1753 992 1753 980V976"/>
    <path d="M1788 242H1792Q1806 242 1806 256V936Q1806 950 1792 950H1788"/>
  </g>
  <g class="solid"><path d="M50 52.500H126M100 85.500H126M56 117.500H126M100 148.500H126M50 191 126 190.500M1798 962.500H1866"/></g>
  <g class="dots"><path d="M52 400H113M52 517H279M52 623H178M52 779H113M52 942H248M924 1004V1022M1815 594H1864M1045 232H1860"/></g>
  <g class="legs"><path d="M926 578 795 450M926 578 1042 511M926 578 761 673M926 558 1094 670"/></g>
  <g class="ends">
    <circle cx="126" cy="52" r="4"/><circle cx="126" cy="85" r="4"/><circle cx="126" cy="117" r="4"/><circle cx="127" cy="148" r="4"/><circle cx="126" cy="190" r="4"/><circle cx="1798" cy="962" r="4"/>
    <circle cx="113" cy="400" r="3"/><circle cx="279" cy="517" r="3"/><circle cx="178" cy="623" r="3"/><circle cx="113" cy="779" r="3"/><circle cx="248" cy="942" r="3"/><circle cx="924" cy="1004" r="3"/><circle cx="1815" cy="594" r="3"/><circle cx="1045" cy="232" r="3"/>
    <circle cx="795" cy="450" r="6"/><circle cx="1042" cy="511" r="6"/><circle cx="761" cy="673" r="6"/><circle cx="1094" cy="670" r="6"/>
  </g>
  <g class="badges" filter="url(#shadow)">
    <ellipse cx="31" cy="52" rx="22" ry="20"/><ellipse cx="82" cy="86" rx="22" ry="20"/><ellipse cx="31" cy="117" rx="22" ry="20"/><ellipse cx="82" cy="149" rx="22" ry="20"/><ellipse cx="31" cy="192" rx="22" ry="20"/><ellipse cx="31" cy="401" rx="22" ry="20"/><ellipse cx="31" cy="518" rx="22" ry="20"/><ellipse cx="31" cy="624" rx="22" ry="20"/><ellipse cx="31" cy="780" rx="22" ry="20"/><ellipse cx="31" cy="941" rx="22" ry="20"/><ellipse cx="924" cy="1040" rx="22" ry="20"/><ellipse cx="1884" cy="958" rx="22" ry="20"/><ellipse cx="1884" cy="595" rx="22" ry="20"/><ellipse cx="1884" cy="229" rx="22" ry="20"/>
  </g>
  <ellipse class="big" cx="926" cy="578" rx="41" ry="40"/>
  <g class="numbers">
    <text x="31" y="62">1</text><text x="82" y="96">2</text><text x="31" y="127">3</text><text x="82" y="159">4</text><text x="31" y="202">5</text><text x="31" y="411">6</text><text x="31" y="528">7</text><text x="31" y="634">8</text><text x="31" y="790">9</text>
    <g class="two"><text x="31" y="950">10</text><text x="924" y="1049">11</text><text x="1884" y="967">12</text><text x="1884" y="604">13</text><text x="1884" y="238">14</text></g>
    <text class="huge" x="926" y="594">15</text>
  </g>
</svg>
<script src="viewports.js"></script>
</body>
</html>
```

FILE: styles.css
```css
* { box-sizing: border-box; }
body { margin: 0; background: #fff; color: #444; font: 12px/16px "Open Sans", "Noto Sans", sans-serif; position: relative; min-height: 100vh; }
button { border: 0; margin: 0; padding: 0; background: none; color: inherit; font: inherit; white-space: nowrap; }
h1, h2, p { margin: 0; font: inherit; }
.defs { position: absolute; width: 0; height: 0; }
.window { display: flex; flex-direction: column; margin: 0 132px 0 137px; padding-top: 46px; }

.title-bar { display: flex; align-items: center; gap: 4px; height: 26px; padding: 1px 0 0 2px; color: #222; }
.app-icon { width: 17px; height: 17px; }
.title-bar h1 { flex: 1; padding-top: 1px; }
.window-buttons { display: flex; padding-right: 3px; }
.window-buttons button { width: 50px; height: 24px; display: grid; place-items: center; }
.window-buttons svg { width: 12px; height: 12px; fill: none; stroke: #222; }

.menu-bar { display: flex; gap: 13px; height: 21px; padding-left: 6px; background: #e8eaee; }
.menu-bar button { height: 18px; line-height: 18px; }

.command-area, .toolbar-area { display: flex; background: #e8eaee; border-right: 2px solid #d7d8dc; }
.grip { width: 12px; flex: none; display: flex; flex-direction: column; align-items: center; justify-content: center; gap: 3px; border-right: 1px solid #d3d6de; }
.grip.low { padding-top: 10px; }
.grip i, .top-grip i { width: 3px; height: 3px; border: 1px solid #b4b6ba; border-radius: 2px; }
.command-main { flex: 1; background: #fff; color: #222; }
.history { display: flex; height: 39px; border-bottom: 1px solid #c5ccd6; }
.history-text { flex: 1; overflow: hidden; display: flex; flex-direction: column; justify-content: flex-end; padding: 0 2px; }
.history-text p { line-height: 17px; flex: none; }
.scroller { width: 19px; background: #f0f0f0; display: flex; flex-direction: column; justify-content: space-between; padding: 4px; }
.scroller svg { display: block; width: 10px; height: 10px; fill: none; stroke: #555; stroke-width: 2; }
.prompt { display: flex; height: 21px; padding-left: 2px; font-weight: bold; align-items: center; color: #111; }
.prompt label { padding-bottom: 2px; }
.prompt input { flex: 1; min-width: 0; border: 0; background: none; outline: 0; font: inherit; }
.spinner { width: 16px; display: grid; gap: 1px; margin-right: 1px; }
.spinner button { height: 9px; background: #eee; border: 1px solid #aaa; display: grid; place-items: center; }
.spinner svg { width: 8px; height: 6px; }

.toolbar-area { border-bottom: 4px solid #d7d8dc; }
.toolbar-main { flex: 1; min-width: 0; }
.tabs { display: flex; height: 22px; background: #d7d8dc; color: #808184; align-items: stretch; }
.tabs button { padding: 4px 11px 0; }
.tabs .active { background: #e8eaee; color: #444; border-radius: 6px 6px 0 0; }
.gear { width: 12px; height: 12px; margin-left: auto; }
.tabs .gear { margin-top: 6px; margin-right: 5px; }
.toolbar { display: grid; grid-template-columns: repeat(33, 1fr); width: 1064px; height: 36px; }
.toolbar button, .tools button { position: relative; display: grid; place-items: center; }
.toolbar button { height: 30px; }
.toolbar svg { width: 27px; height: 27px; }
.more::after { content: ""; position: absolute; right: -1px; bottom: -4px; width: 7px; height: 7px; background: linear-gradient(135deg, transparent 50%, #6b6b6b 50%); }

.workspace { display: grid; grid-template-columns: 127px minmax(0, 1fr) 218px; background: #d7d9de; height: 737px; }
.left-dock { display: flex; flex-direction: column; gap: 2px; min-height: 0; }
.toolbox { position: relative; display: flex; flex-direction: column; background: #e8eaee; border-radius: 5px 5px 0 0; height: 368px; padding-bottom: 4px; }
.top-grip { display: flex; justify-content: center; align-items: center; gap: 4px; height: 9px; border-bottom: 1px solid #d7d9de; }
.tools { flex: 1; display: grid; grid-template-columns: repeat(3, 32px); grid-auto-rows: 32px; align-content: space-between; padding: 0 1px; }
.tools svg { width: 27px; height: 27px; }
.tools .more::after { bottom: -2px; }
.node { fill: #fff; stroke: #111; stroke-width: 1.5px; }
.expand { position: absolute; right: 16px; bottom: 12px; color: #888; font-size: 16px; }
.osnap { flex: 1; background: #e8eaee; border-radius: 5px 5px 0 0; }
.panel-title { display: flex; align-items: center; height: 20px; padding: 0 5px 0 7px; color: #747679; }
.osnap-tabs { display: flex; border-top: 1px solid #d7d9de; height: 34px; }
.osnap-tabs button { width: 50px; display: grid; place-items: center; }
.osnap-tabs .filter { flex: 1; background: #d7d8dc; justify-content: start; padding-left: 12px; }
.osnap-tabs svg { width: 26px; height: 26px; }
.checks { padding: 4px; display: grid; grid-auto-rows: 17px; color: #777a7e; }
.checks label { display: flex; align-items: center; gap: 5px; }
.checks input { appearance: none; width: 14px; height: 14px; margin: 0; border: 1px solid #c6cede; position: relative; }
.checks input:checked::after { content: ""; position: absolute; left: 4px; top: 0; width: 4px; height: 9px; border: solid #666; border-width: 0 2px 2px 0; transform: rotate(40deg); }
.checks .disable { color: #333; margin-top: 20px; height: 17px; }
.disable input { background: #fff; }
.disable input:checked::after { border-color: #222; }

.center { display: flex; flex-direction: column; padding: 0 3px 0 4px; }
.viewports { flex: 1; display: grid; grid-template: 1fr 1fr / 325fr 323fr; gap: 4px; min-height: 0; }
.viewport { position: relative; border: 1px solid #c3cad8; background: #9da3aa; min-width: 0; min-height: 0; overflow: hidden; }
.viewport canvas { position: absolute; inset: 0; width: 100%; height: 100%; }
.view-label { position: relative; display: flex; align-items: center; gap: 8px; height: 20px; padding: 0 0 0 7px; background: #dfe1e5; color: #666a6e; font-weight: bold; border-radius: 0 0 4px 0; }
.view-label b { width: 12px; height: 17px; border-left: 1px solid #888; display: grid; place-items: center; }
.view-label b::after { content: ""; border: 4px solid transparent; border-top: 5px solid #555; border-bottom: 0; }
.view-label.current { background: #6f9fff; color: #1c2a44; padding-left: 9px; }
.axes { position: absolute; left: 37px; bottom: 25px; width: 60px; height: 60px; fill: none; stroke: #6a6d70; }
.axes text { fill: #666a6d; stroke: none; font-size: 13px; }
.view-tabs { display: flex; height: 25px; align-items: center; color: #84868a; }
.view-tabs button { padding: 0 10px 0 9px; height: 21px; }
.view-tabs .active { padding: 0 8px 0 12px; background: #e8eaee; color: #444; border: 1px solid #c8d0e2; border-radius: 0 0 5px 5px; margin-left: -1px; }
.view-tabs svg { width: 12px; height: 12px; vertical-align: middle; fill: #eee; stroke: #777; }

.right-dock { display: flex; flex-direction: column; margin-right: 3px; background: #e8eaee; border-radius: 5px 5px 0 0; margin-left: 1px; min-height: 0; }
.right-dock .panel-title { flex: none; border-bottom: 1px solid #d7d9de; padding-left: 5px; }
.dock-body { display: flex; flex: 1; min-height: 0; }
.layers { flex: 1; display: flex; flex-direction: column; min-width: 0; }
.layer-tools { display: grid; grid-template-columns: repeat(7, 24px); grid-auto-rows: 24px; padding: 6px 0 7px; margin-left: -1px; }
.layer-tools button { display: grid; place-items: center; }
.layer-tools svg { width: 16px; height: 16px; }
.off { fill: #dcdddf; stroke: #a2a3a5; stroke-width: 2px; }
.search { display: flex; align-items: center; gap: 1px; height: 23px; margin: 0 1px 0 0; padding: 0 5px; border: 1px solid #cdd4e4; border-radius: 12px; background: #fff; }
.search svg { width: 13px; height: 13px; flex: none; fill: none; stroke: #333; stroke-width: 1.5px; }
.search input { border: 0; outline: 0; flex: 1; min-width: 0; font: inherit; background: none; padding: 0; }
.search input::placeholder { color: #808285; }
.layer-list { flex: 1; display: flex; flex-direction: column; margin-top: 7px; background: #fff; margin-right: 1px; }
table { border-collapse: collapse; table-layout: fixed; width: 100%; }
th { height: 25px; width: 42px; padding: 0 5px; text-align: left; font-weight: normal; border-bottom: 1px solid #e6e8ec; border-right: 1px solid #dfe1e6; overflow: hidden; }
th:first-child { width: 107px; }
th:nth-child(2) { width: 29px; }
th:nth-child(2) span { display: block; width: 22px; overflow: hidden; }
th:last-child { border-right: 0; }
td { height: 20px; padding: 0; border-bottom: 1px dashed #e2e5ea; }
td:first-child { padding-left: 18px; }
td:nth-child(2) { padding-left: 7px; }
td svg { display: block; width: 16px; height: 12px; fill: none; stroke: #222; stroke-width: 1.5px; }
.current-layer { font-weight: bold; color: #222; }
.scroll-thumb { width: 51px; height: 8px; margin: auto 0 4px 7px; border-radius: 4px; background: #c2c3c4; }
.dock-tabs { width: 36px; padding-left: 4px; display: flex; flex-direction: column; }
.dock-tabs button { height: 49px; display: grid; place-items: center; background: #d7d8dc; flex: none; }
.dock-tabs .active { background: #e8eaee; }
.dock-tabs button:nth-child(2) { border-radius: 6px 0 0 0; }
.dock-tabs::after { content: ""; flex: 1; background: #d7d8dc; }
.dock-tabs svg { width: 26px; height: 26px; }

.status-bar { display: flex; align-items: center; height: 23px; background: #e8eaee; border-bottom: 2px solid #4a4b4e; color: #5e6064; }
.side-toggle { width: 15px; height: 15px; margin-left: 8px; border: 2px solid #444; border-left-width: 6px; background: #fff; flex: none; }
.side-toggle.right { border-left-width: 2px; border-right-width: 6px; margin: 0 9px 0 0; }
.s-cplane { margin-left: 22px; }
.s-coords { margin-left: 96px; }
.s-units { margin-left: 103px; }
.s-layer { display: flex; align-items: center; gap: 7px; margin-left: 26px; }
.swatch { width: 17px; height: 17px; background: #000; }
.modes { display: flex; margin-left: auto; margin-right: 60px; align-items: center; gap: 2px; }
.modes button { padding: 0 10px; height: 20px; }
.modes .on { padding: 0 8px; background: #cfd8ee; color: #2b2e34; font-weight: bold; border-radius: 2px; }
.modes .auto { display: flex; align-items: center; gap: 10px; padding-right: 17px; }
.modes .filter-mode { padding-left: 14px; }
.modes .auto svg { width: 12px; height: 14px; fill: none; stroke: #999; }
.modes output { padding-left: 12px; }

.callouts { position: absolute; left: 0; top: 0; width: 100%; height: 1080px; pointer-events: none; }
.outline { fill: none; stroke: #d40008; stroke-width: 3px; }
.solid { fill: none; stroke: #d40008; stroke-width: 3px; }
.dots { fill: none; stroke: #d40008; stroke-width: 2px; stroke-dasharray: 2 2; }
.legs { fill: none; stroke: #d40008; stroke-width: 4px; stroke-dasharray: 4 4; }
.ends { fill: #d40008; }
.badges, .big { fill: #b92223; }
.numbers { fill: #fff; text-anchor: middle; font-family: "Liberation Sans", Arial, sans-serif; font-size: 29px; }
.numbers .two { font-size: 24px; }
.numbers .huge { font-size: 43px; }
```

FILE: viewports.js
```js
const MINOR = "rgba(120,126,134,.30)";
const MAJOR = "#868991";
const RED = "#9c4444";
const GREEN = "#459a48";

function line(ctx, color, x1, y1, x2, y2, width) {
  ctx.strokeStyle = color;
  ctx.lineWidth = width || 1;
  ctx.beginPath();
  ctx.moveTo(x1, y1);
  ctx.lineTo(x2, y2);
  ctx.stroke();
}

// Orthographic view: grid centred on the origin.
function drawPlan(ctx, w, h) {
  const cx = w / 2, cy = h / 2, step = 6.43;
  for (const major of [false, true]) {
    for (let i = -60; i <= 60; i++) {
      if ((i % 10 === 0) !== major) continue;
      const x = Math.floor(cx + i * step) + 0.5;
      const y = Math.floor(cy + i * step) + 0.5;
      line(ctx, major ? MAJOR : MINOR, x, 0, x, h);
      line(ctx, major ? MAJOR : MINOR, 0, y, w, y);
    }
  }
  line(ctx, GREEN, Math.floor(cx) + 0.5, 0, Math.floor(cx) + 0.5, cy, 1.5);
  line(ctx, RED, cx, Math.floor(cy) + 0.5, w, Math.floor(cy) + 0.5, 1.5);
}

// Perspective view: ground plane projected with vanishing points above the view.
function drawPerspective(ctx, w, h) {
  const cx = w / 2, cy = h / 2;
  const depth = (u, v) => 1 - 0.0285 * u + 0.0487 * v;
  const project = (u, v) => {
    const d = depth(u, v);
    return [cx + (43.95 * u + 24.56 * v) / d, cy + (11.6 * u - 19.46 * v) / d];
  };
  const ground = (color, u1, v1, u2, v2, width) => {
    const near = 0.15;
    let d1 = depth(u1, v1), d2 = depth(u2, v2);
    if (d1 < near && d2 < near) return;
    if (d1 < near) { const t = (near - d1) / (d2 - d1); u1 += t * (u2 - u1); v1 += t * (v2 - v1); }
    if (d2 < near) { const t = (near - d2) / (d1 - d2); u2 += t * (u1 - u2); v2 += t * (v1 - v2); }
    const [a, b] = project(u1, v1), [c, e] = project(u2, v2);
    line(ctx, color, a, b, c, e, width);
  };
  const shade = ctx.createLinearGradient(0, 0, 0, h);
  shade.addColorStop(0, "#91969d");
  shade.addColorStop(0.6, "#9ba1a8");
  shade.addColorStop(1, "#9da3aa");
  ctx.fillStyle = shade;
  ctx.fillRect(0, 0, w, h);
  const fade = ctx.createLinearGradient(0, 0, 0, h);
  fade.addColorStop(0, "rgba(120,126,134,.03)");
  fade.addColorStop(1, "rgba(120,126,134,.25)");
  const size = 45;
  for (let i = -200; i <= 300; i++) {
    if (i % 10 === 0) continue;
    ground(fade, i / 10, -size, i / 10, size);
    ground(fade, -size, i / 10, size, i / 10);
  }
  for (let i = -size; i <= size; i++) {
    ground("rgba(125,127,135,.75)", i, -size, i, size);
    ground("rgba(125,127,135,.75)", -size, i, size, i);
  }
  ground(GREEN, 0, 0, 0, size, 1.5);
  ground(RED, 0, 0, size, 0, 1.5);
}

function drawAll() {
  for (const canvas of document.querySelectorAll("canvas")) {
    const w = canvas.width = canvas.clientWidth;
    const h = canvas.height = canvas.clientHeight;
    const ctx = canvas.getContext("2d");
    (canvas.dataset.kind === "plan" ? drawPlan : drawPerspective)(ctx, w, h);
  }
}
drawAll();
addEventListener("resize", drawAll);
```
